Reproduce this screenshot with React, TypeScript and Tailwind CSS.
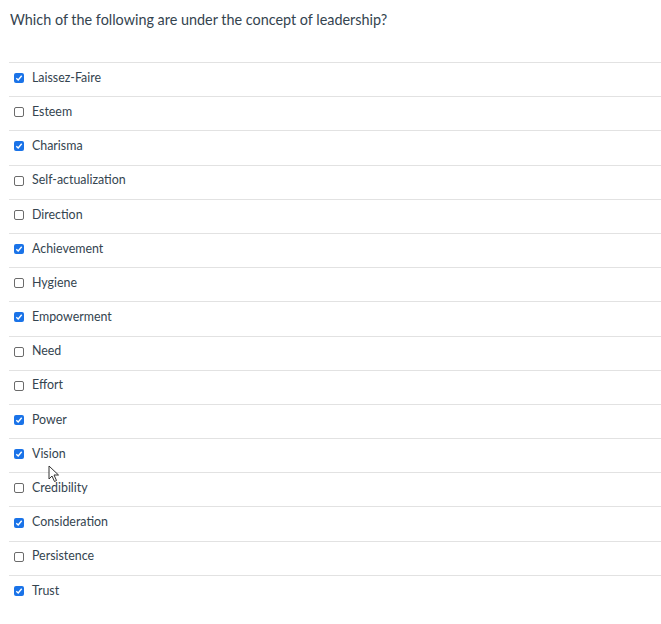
const options = [
  { label: 'Laissez-Faire', checked: true },
  { label: 'Esteem', checked: false },
  { label: 'Charisma', checked: true },
  { label: 'Self-actualization', checked: false },
  { label: 'Direction', checked: false },
  { label: 'Achievement', checked: true },
  { label: 'Hygiene', checked: false },
  { label: 'Empowerment', checked: true },
  { label: 'Need', checked: false },
  { label: 'Effort', checked: false },
  { label: 'Power', checked: true },
  { label: 'Vision', checked: true },
  { label: 'Credibility', checked: false },
  { label: 'Consideration', checked: true },
  { label: 'Persistence', checked: false },
  { label: 'Trust', checked: true },
]

const Box = ({ checked }: { checked: boolean }) =>
  checked ? (
    <span className="flex h-[10px] w-[10px] items-center justify-center rounded-[2px] bg-[#1a73e8]">
      <svg width="8" height="8" viewBox="0 0 8 8">
        <path d="M1.3 4.2 L3.2 6 L6.7 1.8" fill="none" stroke="white" strokeWidth="1.4" />
      </svg>
    </span>
  ) : (
    <span className="h-[10px] w-[10px] rounded-[2px] border border-[#6b6b6b] bg-white" />
  )

const App = () => {
  return (
    <div className="relative h-[624px] w-[661px] bg-white pl-[9px] text-[#34444f]" style={{ fontFamily: 'Lato, "Open Sans", sans-serif' }}>
      <div className="h-[62px] pt-[11px] pl-[1px] text-[14.4px] leading-[17px]">
        Which of the following are under the concept of leadership?
      </div>
      {options.map((o) => (
        <div key={o.label} className="flex h-[34.2px] items-center gap-[8px] border-t border-[#e2e2e2] pb-[3px] pl-[5px] text-[12.4px]">
          <Box checked={o.checked} />
          <span>{o.label}</span>
        </div>
      ))}
      <svg className="absolute left-[48px] top-[465px]" width="12" height="18" viewBox="0 0 12 18">
        <path d="M1 1 L1 14 L4 11 L6.5 16.5 L8.5 15.5 L6 10 L10.5 10 Z" fill="white" stroke="#333" strokeWidth="1" />
      </svg>
    </div>
  )
}

export default App
